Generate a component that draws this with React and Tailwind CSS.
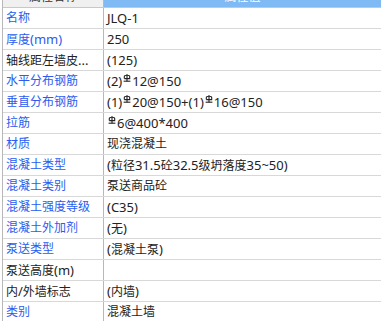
import React from 'react';

const rows = [
  { name: '名称', value: 'JLQ-1', blue: true },
  { name: '厚度(mm)', value: '250', blue: true },
  { name: '轴线距左墙皮...', value: '(125)' },
  { name: '水平分布钢筋', value: ['(2)', 'bar', '12@150'], blue: true },
  { name: '垂直分布钢筋', value: ['(1)', 'bar', '20@150+(1)', 'bar', '16@150'], blue: true },
  { name: '拉筋', value: ['bar', '6@400*400'], blue: true },
  { name: '材质', value: '现浇混凝土', blue: true },
  { name: '混凝土类型', value: '(粒径31.5砼32.5级坍落度35~50)', blue: true },
  { name: '混凝土类别', value: '泵送商品砼', blue: true },
  { name: '混凝土强度等级', value: '(C35)', blue: true },
  { name: '混凝土外加剂', value: '(无)', blue: true },
  { name: '泵送类型', value: '(混凝土泵)', blue: true },
  { name: '泵送高度(m)', value: '' },
  { name: '内/外墙标志', value: '(内墙)' },
  { name: '类别', value: '混凝土墙', blue: true },
];

// grade III rebar mark
function Bar() {
  return (
    <svg width="8" height="8" viewBox="0 0 8 8" className="inline-block align-top mt-[3px] mx-[1px]" fill="none" stroke="#222" strokeWidth="1.1">
      <path d="M4 0.3V7.3" />
      <path d="M1.3 4.6V2.6Q1.3 1.2 4 1.2Q6.7 1.2 6.7 2.6V4.6H1.3" />
      <path d="M0.6 7.2H7.4" />
    </svg>
  );
}

// latin runs a touch larger than the CJK ones, like the original UI font
function Txt({ s }) {
  return s.split(/([\u4e00-\u9fff]+)/).filter(Boolean).map((p, i) =>
    /[\u4e00-\u9fff]/.test(p) ? <span key={i}>{p}</span> : <span key={i} className="text-[13px]">{p}</span>
  );
}

function Value({ v }) {
  if (!Array.isArray(v)) return <Txt s={v} />;
  return v.map((p, i) => (p === 'bar' ? <Bar key={i} /> : <Txt key={i} s={p} />));
}

export default function App() {
  return (
    <div className="w-[381px] h-[321px] overflow-hidden bg-white text-[12px] leading-[20px] text-[#222]" style={{ fontFamily: '"Noto Sans", "Noto Sans CJK SC", sans-serif' }}>
      <div className="ml-[2px] border-l border-[#b8b8b8]">
        <div className="flex h-[8px] overflow-hidden border-b border-[#c8c8c8]">
          <div className="w-[101px] shrink-0 bg-[#f0f0f0] border-r border-[#b8b8b8] text-center -mt-[13px] text-[#333]">属性名称</div>
          <div className="flex-1 bg-[#80baf5] text-center -mt-[13px] text-white">属性值</div>
        </div>
        {rows.map((r) => (
          <div key={r.name} className="flex h-[21px] border-b border-[#d8d8d8]">
            <div className={`w-[101px] shrink-0 pl-[3px] border-r border-[#b8b8b8] whitespace-nowrap ${r.blue ? 'text-[#2a5cf0]' : 'text-[#222]'}`}><Txt s={r.name} /></div>
            <div className="flex-1 pl-[3px] whitespace-nowrap"><Value v={r.value} /></div>
          </div>
        ))}
      </div>
    </div>
  );
}
